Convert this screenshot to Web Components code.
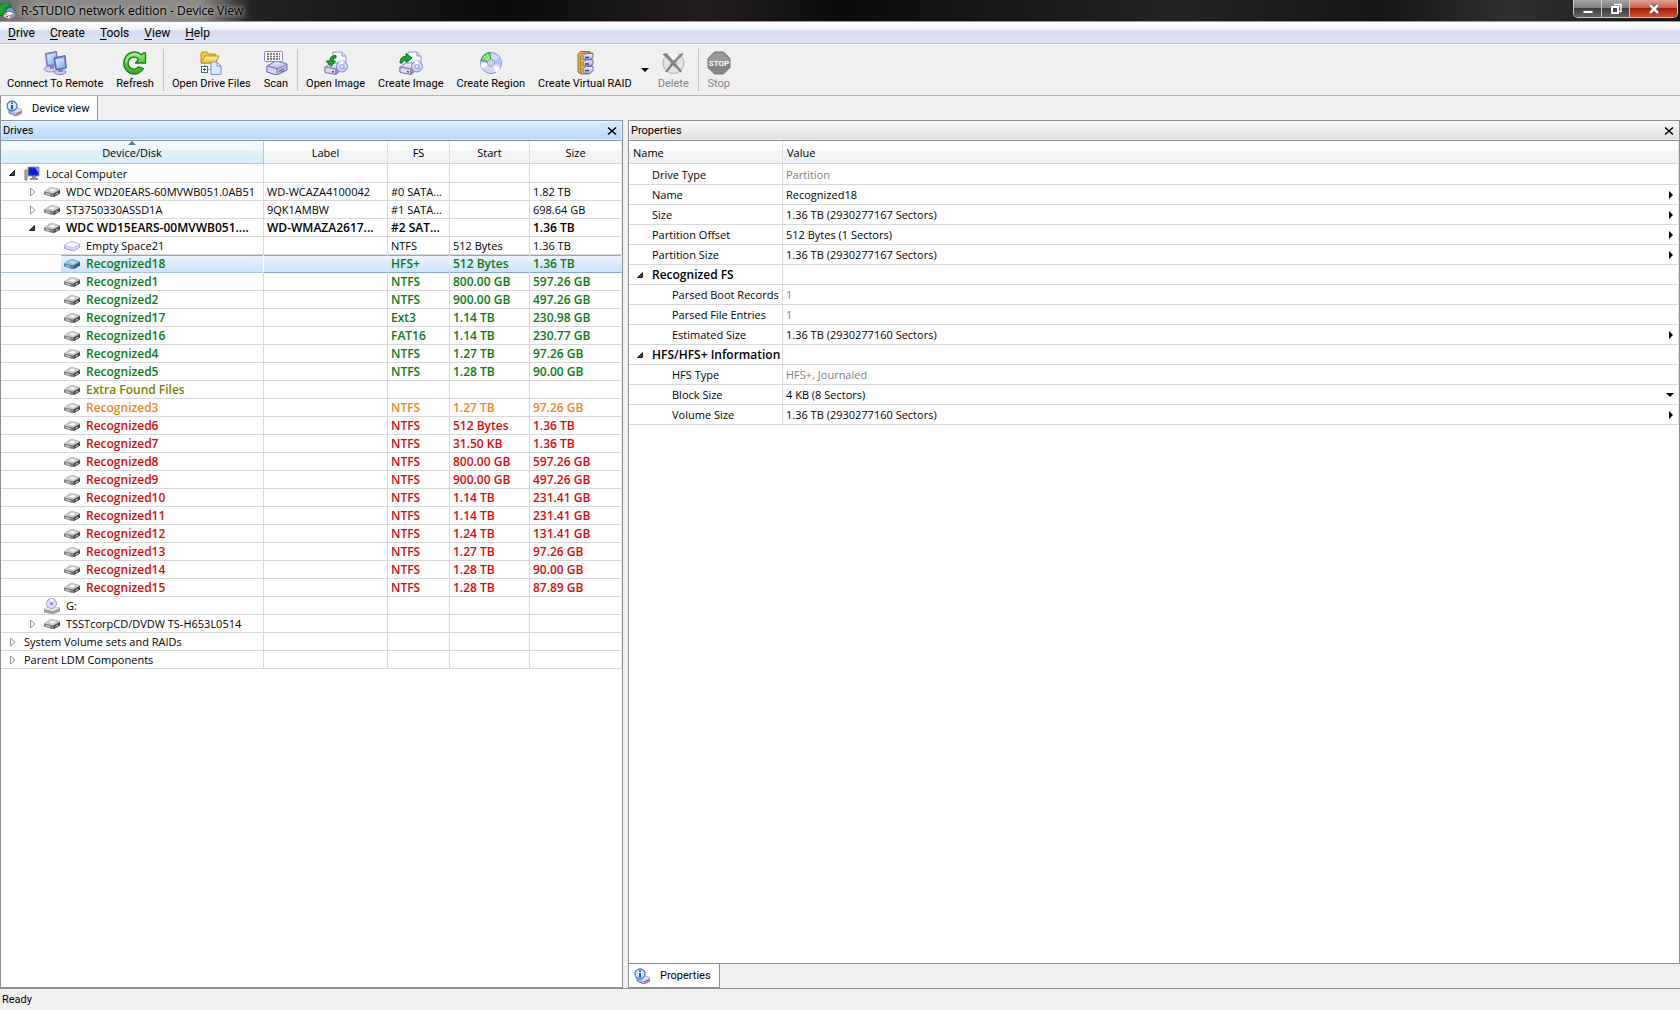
<!DOCTYPE html>
<html lang="en">
<head>
<meta charset="utf-8">
<title>R-STUDIO network edition - Device View</title>
<style>
html, body {
    height: 100%;
    margin: 0;
}

body {
    font-family: "Open Sans", "Noto Sans", sans-serif;
    font-size: 11px;
    color: #000;
    background: #f0f0f0;
    overflow: hidden;
}
</style>
</head>
<body>
<studio-app></studio-app>

<script>
const GRADIENTS = `
<defs>
    <linearGradient id="screen" x1="0" y1="0" x2="1" y2="1"><stop offset="0" stop-color="#e4f4ff"/><stop offset="1" stop-color="#6fb0f4"/></linearGradient>
    <linearGradient id="lilac" x1="0" y1="0" x2="0" y2="1"><stop offset="0" stop-color="#f4f4ff"/><stop offset="1" stop-color="#a9a9dc"/></linearGradient>
    <linearGradient id="green" x1="0" y1="0" x2="0" y2="1"><stop offset="0" stop-color="#8fe860"/><stop offset="1" stop-color="#2fae2a"/></linearGradient>
    <linearGradient id="folder" x1="0" y1="0" x2="0" y2="1"><stop offset="0" stop-color="#fff3a8"/><stop offset="1" stop-color="#edbf3c"/></linearGradient>
</defs>`;

// shared by the image icons: drive in front, sheet and disc behind
const IMAGE_BASE = `
    <path d="M9 1h9l4 4v11H9z" fill="#f6f8ff" stroke="#8d96c4"/>
    <path d="M18 1v4h4" fill="#dde2f6" stroke="#8d96c4"/>
    <path d="M1 16l6-4h8l-3 8-11 1z" fill="url(#lilac)" stroke="#8585bb"/>
    <path d="M1 16l11 2v5.500l-11-2z" fill="#d8d8f2" stroke="#7777ad"/>
    <path d="M12 18l4-3v5l-4 3.500z" fill="#9b9bcc" stroke="#7777ad"/>
    <path d="M8 20.500l2 .4" stroke="#c22" stroke-width="1.500"/>
    <circle cx="18" cy="15.500" r="5.500" fill="#d2d2f8" stroke="#8888cc"/>
    <path d="M18 15.500l-3-4.500a5.500 5.500 0 0 1 5-.6z" fill="#fff"/>
    <path d="M18 15.500l5 2a5.500 5.500 0 0 1-3 3z" fill="#a8c4fa"/>
    <circle cx="18" cy="15.500" r="1.800" fill="#fff" stroke="#8888cc"/>`;

const ICONS = {
    app: [16, `
        <path d="M1 13A7.500 7.500 0 0 1 10 1l1 2-4 1-3 5z" fill="#21a038" stroke="#0d6b22"/>
        <path d="M6 6l5-2 4 4-1 4-8-1z" fill="#6fa4d9" stroke="#456"/>
        <path d="M4 11l5-3 6 2-5 3z" fill="#fff" stroke="#668"/>
        <path d="M4 11l6 2v3l-6-2z" fill="#d8dcec"/><path d="M10 13l5-3v3l-5 3z" fill="#9aa0b8"/>
        <path d="M6 13.500h2" stroke="#d22"/>`],
    connect: [24, `
        <ellipse cx="7.500" cy="18" rx="6.500" ry="3" fill="#d4d4f0" stroke="#9292c4"/>
        <ellipse cx="17" cy="21" rx="6" ry="2.500" fill="#c9c9ec" stroke="#8484bd"/>
        <path d="M7 14l4 1v3H7z" fill="#8888c4"/>
        <path d="M2.500 2.500l11-2 1 13L4 15z" fill="#8f9bd4" stroke="#6470b4"/>
        <path d="M4 4l8.500-2 .8 10.500L5 13.500z" fill="url(#screen)"/>
        <path d="M15 18h4l1 3h-5z" fill="#8080bd"/>
        <path d="M11 7l11-2.500 1.500 12.500L13 18.500z" fill="#7684cb" stroke="#5562ab"/>
        <path d="M12.500 8.500l8.500-2 1 9.700-8 1z" fill="url(#screen)"/>`],
    refresh: [24, `
        <path d="M20.500 17.500Q17 23 11.500 23A10.500 11 0 1 1 18.300 3.800L20.500 2H22.500V12H12.500L15.500 8.500A5.800 6 0 1 0 15.500 15.800z" fill="url(#green)" stroke="#177a20" stroke-width="1.300" stroke-linejoin="round"/>
        <path d="M3 11a9 9 0 0 1 14-6" fill="none" stroke="#c8ffae"/>`],
    openfiles: [24, `
        <path d="M2 12V2.500L3 1h5l1.500 2h7L17 5v7z" fill="#f1c94b" stroke="#b98b1c"/>
        <path d="M2 12l4-7h14l-3.500 7z" fill="url(#folder)" stroke="#b98b1c"/>
        <rect x="2.500" y="15.500" width="6" height="6" fill="#fff" stroke="#56636e"/>
        <path d="M4 18.500h3M5.500 17v3" stroke="#167b25" stroke-width="1.200"/>
        <path d="M5.500 12v3M9 18.500h3" stroke="#777" stroke-dasharray="1 1"/>
        <path d="M12 11h6l4 4v8.500H12z" fill="#d8e8ff" stroke="#7b91c8"/>
        <path d="M18 11v4h4z" fill="#f9fcff" stroke="#7b91c8"/>`],
    scan: [24, `
        <path d="M3 15l9-5 11 3v6l-10 5-10-3z" fill="#b7b7e2" stroke="#7777b2"/>
        <path d="M3 15l9-5 11 3-10 5z" fill="url(#lilac)" stroke="#8585bb"/>
        <path d="M3 15l10 3v6L3 21z" fill="#d8d8f4" stroke="#7777b2"/>
        <path d="M15 20.500l5-2.400" stroke="#555599"/><path d="M17 21.500l3-1.400" stroke="#c33"/>
        <rect x=".5" y=".5" width="18" height="10" rx="1" fill="#f7f8ff" stroke="#8088b6"/>
        <path d="M3 3h13" stroke="#c5362c" stroke-width="1.500" stroke-dasharray="2 1"/>
        <path d="M3 5.500h13" stroke="#2f8f47" stroke-width="1.500" stroke-dasharray="2 1"/>
        <path d="M3 8h13" stroke="#31449c" stroke-width="1.500" stroke-dasharray="2 1"/>`],
    openimage: [24, IMAGE_BASE + `
        <path d="M12 4.500Q5.500 4.500 6 10H2l5 5.500 4.500-5.500H8.800Q8.500 7 12 6.800z" fill="#21a336" stroke="#0b6e1d" stroke-linejoin="round"/>`],
    createimage: [24, IMAGE_BASE + `
        <path d="M1 12Q1 5 7 5.500V2.500l6 4.500-6 4.500V9Q4 8.500 3.500 12z" fill="#21a336" stroke="#0b6e1d" stroke-linejoin="round"/>`],
    region: [24, `
        <circle cx="12" cy="12" r="10.500" fill="#d6d9f8" stroke="#8f92c8"/>
        <path d="M12 12L3 17.500a10 10 0 0 1-1-5z" fill="#fff"/>
        <path d="M12 12l5 9.500a10 10 0 0 0 4-4z" fill="#fff"/>
        <path d="M12 12l9.800 2.500a10 10 0 0 0-1.500-8z" fill="#b4c3f5"/>
        <path d="M12 12L2 9.500A10.500 10.500 0 0 1 11 1.500z" fill="#7ad668" stroke="#2b9a35"/>
        <path d="M12 12L5 5M12 12L8 3" stroke="#c8ffbd"/>
        <circle cx="12" cy="12" r="3.500" fill="#eeeefa" stroke="#8f92c8"/>
        <circle cx="12" cy="12" r="1.500" fill="#fff" stroke="#aaadd4"/>`],
    raid: [24, `
        <path d="M5 3l3-2.500h9v2L8 5v18l-3-2z" fill="#e3b341" stroke="#9c741b"/>
        <path d="M8 4l2-2h10l-1 3v15l-3 3H8z" fill="#efcf72" stroke="#a57d22"/>
        <g fill="url(#lilac)" stroke="#6f6fab">
            <path d="M10 4.500l3-2h7v4l-3 2h-7z"/><path d="M10 11l3-2h7v4l-3 2h-7z"/><path d="M10 17.500l3-2h7v4l-3 3h-7z"/>
        </g>
        <path d="M12 6.500h4M12 13h4M12 19.500h4" stroke="#3e3e8e" stroke-width="1.500"/>`],
    remove: [24, `
        <circle cx="12.500" cy="12" r="10.500" fill="#e2e2e2" stroke="#b4b4b4"/>
        <path d="M12.500 12L7 3a10 10 0 0 1 10-1z" fill="#f8f8f8"/>
        <circle cx="12.500" cy="12" r="3" fill="#eee" stroke="#aaa"/>
        <path d="M1.500 3l4-1 7 8 8-8 2 1-8.500 9 7 8-1.500 1.500-7.500-7.500-6 7.500-2-1 6.500-8.500z" fill="#828282"/>`],
    stop: [24, `
        <path d="M7.500 1h9L23 7.500v9L16.500 23h-9L1 16.500v-9z" fill="#858585" stroke="#777"/>
        <path d="M8 2h8l6 6v3H2V8z" fill="#999"/>
        <text x="12" y="15" text-anchor="middle" font-family="Roboto" font-size="8" font-weight="bold" fill="#fff">STOP</text>`],
    info: [16, `
        <path d="M3 10l6-3 7 3v3l-6 3-7-3z" fill="#b4b4e2" stroke="#7777b5"/>
        <path d="M3 10l6-3 7 3-6 3z" fill="#e6e6fb"/>
        <path d="M10 14l5-2.400" stroke="#d23a3a"/>
        <circle cx="6" cy="6" r="5" fill="#d6ebff" stroke="#4c7cc0" stroke-width="1.300"/>
        <path d="M6 2.500V4M6 5v4" stroke="#155dbd" stroke-width="2"/>
        <path d="M4.500 9h3" stroke="#155dbd"/>`],
    computer: [16, `
        <path d="M1 5h2v10H1z" fill="#bbb" stroke="#777"/>
        <path d="M4 2h11v9H4z" fill="#1020c8" stroke="#99a"/>
        <path d="M11 2.500h3.500V8z" fill="#7f9cff"/>
        <path d="M8 11h4v2h2v2H6v-2h2z" fill="#8d8d95"/>`],
    drive: [16, `
        <path d="M0 7.500L6 3.500h4l6 2v4L10 13H8L0 10.500z" fill="#808080"/>
        <path d="M0 7.500L6 3.500h4l6 2.500-6.500 3.500z" fill="#c9c9c9"/>
        <path d="M5 6.500L8 5l4 1-3 1.500z" fill="#fff"/>
        <path d="M9.500 9.500L16 6v3.500L10 13z" fill="#484848"/>
        <path d="M11.500 10.500l2.500-1.300M2 9.500l4 1.200" stroke="#ddd"/>`],
    picked: [16, `
        <path d="M0 7.500L6 3.500h4l6 2v4L10 13H8L0 10.500z" fill="#5584ae"/>
        <path d="M0 7.500L6 3.500h4l6 2.500-6.500 3.500z" fill="#94bfe2"/>
        <path d="M5 6.500L8 5l4 1-3 1.500z" fill="#d0e6f8"/>
        <path d="M9.500 9.500L16 6v3.500L10 13z" fill="#315c84"/>
        <path d="M2 9.500l4 1.200" stroke="#bcd8ee"/>`],
    empty: [16, `
        <path d="M.5 7.500L6 4h4l5.500 2v3.500L9.500 13 .5 10.500z" fill="#d6d6f6" stroke="#a3a3d8"/>
        <path d="M.5 7.500L6 4h4l5.500 2-6 3.500z" fill="#fafaff" stroke="#b5b5e2" stroke-width=".6"/>`],
    disc: [16, `
        <path d="M0 11l6-3 10 2v3l-7 3-9-2z" fill="#a0a0a0" stroke="#888" stroke-width=".6"/>
        <path d="M0 11l6-3 10 2-7 3z" fill="#ececec"/>
        <circle cx="7.500" cy="5.500" r="5" fill="#dcdcf8" stroke="#9c9cce"/>
        <path d="M7.500 5.500L6 1a5 5 0 0 1 4 .5z" fill="#fff"/>
        <circle cx="7.500" cy="5.500" r="1.500" fill="#7c83da"/>`],
    closed: [12, `<path d="M4.500 2v8l4.500-4z" fill="#fff" stroke="#989898"/>`],
    open: [12, `<path d="M8.500 3.500v5h-5z" fill="#444" stroke="#222"/>`],
    right: [10, `<path d="M4 1v8l4-4z" fill="#000"/>`],
    down: [10, `<path d="M1 3h8L5 7z" fill="#000"/>`],
    cross: [10, `<path d="M1 1.500l8 7M9 1.500l-8 7" stroke="#000" stroke-width="1.500"/>`]
};

function icon(name) {
    const [size, body] = ICONS[name];
    return `<svg width="${size}" height="${size}" viewBox="0 0 ${size} ${size}" aria-hidden="true">${GRADIENTS}${body}</svg>`;
}

class TitleBar extends HTMLElement {
    constructor() {
        super();
        this.attachShadow({ mode: 'open' }).innerHTML = `
        <style>
        :host {
            display: flex;
            align-items: flex-start;
            height: 21px;
            overflow: hidden;
            color: #000;
            font-size: 12px;
            background: linear-gradient(90deg, #6a6a68 0, #8c8a86 40px, #8c8a86 200px, #232323 252px, #0c0c0c 30%, #221e1d 42%, #0c0c0c 50%, #242424 70%, #151515 82%, #303030 90%, #151515 100%);
            border-bottom: 1px solid #999;
        }
        .caption {
            display: flex;
            align-items: center;
            gap: 5px;
            flex: 1;
            height: 21px;
            text-shadow: 0 0 5px #bbb, 0 0 5px #bbb;
        }
        .controls {
            display: flex;
            height: 18px;
            margin-right: 2px;
            border: 1px solid #c8c8c8;
            border-top: 0;
            border-radius: 0 0 5px 5px;
            overflow: hidden;
            box-sizing: border-box;
        }
        button {
            display: grid;
            place-items: center;
            width: 28px;
            padding: 0;
            border: 0;
            border-right: 1px solid #c8c8c8;
            background: linear-gradient(#a5a5a5 0, #7d7d7d 45%, #3c3c3c 50%, #666 100%);
        }
        button.close {
            width: 47px;
            border: 0;
            background: linear-gradient(#e0a294 0, #c9604e 45%, #a51d0a 50%, #d2512c 100%);
        }
        </style>
        <div class="caption">${icon('app')}<span>R-STUDIO network edition - Device View</span></div>
        <div class="controls">
            <button type="button" aria-label="Minimize"><svg width="12" height="12"><path d="M1 7.500h10v3H1z" fill="#fff" stroke="#555"/></svg></button>
            <button type="button" aria-label="Restore"><svg width="12" height="12"><path d="M4 1.500h7v7H9" fill="none" stroke="#fff" stroke-width="1.500"/><path d="M2 4h6v6H2z" fill="none" stroke="#fff" stroke-width="2"/></svg></button>
            <button type="button" class="close" aria-label="Close"><svg width="12" height="12"><path d="M2 2l8 8M10 2l-8 8" stroke="#444" stroke-width="4"/><path d="M2 2l8 8M10 2l-8 8" stroke="#fff" stroke-width="2.500"/></svg></button>
        </div>`;
    }
}

class MenuBar extends HTMLElement {
    constructor() {
        super();
        const items = ['Drive', 'Create', 'Tools', 'View', 'Help'];
        this.attachShadow({ mode: 'open' }).innerHTML = `
        <style>
        :host {
            display: flex;
            gap: 3px;
            height: 21px;
            padding-left: 2px;
            background: linear-gradient(#fff 0, #eef1f8 38%, #d5dbed 42%, #e1e6f5 100%);
            border-bottom: 1px solid #b6bccc;
        }
        button {
            padding: 0 6px;
            border: 0;
            background: none;
            font: 12px Roboto, sans-serif;
            color: #000;
        }
        u {
            text-underline-offset: 2px;
        }
        </style>
        ${items.map(item => `<button type="button"><u>${item[0]}</u>${item.slice(1)}</button>`).join('')}`;
    }
}

class ToolButton extends HTMLElement {
    connectedCallback() {
        const off = this.hasAttribute('disabled');
        if (!this.shadowRoot) this.attachShadow({ mode: 'open' });
        this.shadowRoot.innerHTML = `
        <style>
        :host {
            display: block;
        }
        button {
            display: flex;
            flex-direction: column;
            align-items: center;
            gap: 1px;
            padding: 6px 6px 0;
            border: 0;
            background: none;
            font: 11px/16px Roboto, sans-serif;
            color: #000;
        }
        button:disabled {
            color: #848484;
        }
        </style>
        <button type="button" ${off ? 'disabled' : ''}>${icon(this.getAttribute('icon'))}<span><slot></slot></span></button>`;
    }
}

class ToolBar extends HTMLElement {
    constructor() {
        super();
        this.attachShadow({ mode: 'open' }).innerHTML = `
        <style>
        :host {
            display: flex;
            gap: 1px;
            height: 50px;
            padding-left: 1px;
            border-top: 1px solid #fff;
            border-bottom: 1px solid #b4b4b4;
        }
        hr {
            width: 1px;
            height: 42px;
            margin: 4px 1px 0 2px;
            border: 0;
            background: #c6c6c6;
        }
        .more {
            width: 12px;
            padding: 0;
            border: 0;
            background: none;
        }
        </style>
        <tool-button icon="connect">Connect To Remote</tool-button>
        <tool-button icon="refresh">Refresh</tool-button>
        <hr>
        <tool-button icon="openfiles">Open Drive Files</tool-button>
        <tool-button icon="scan">Scan</tool-button>
        <hr>
        <tool-button icon="openimage">Open Image</tool-button>
        <tool-button icon="createimage">Create Image</tool-button>
        <tool-button icon="region">Create Region</tool-button>
        <tool-button icon="raid">Create Virtual RAID</tool-button>
        <button class="more" type="button" aria-label="More RAID types">${icon('down')}</button>
        <tool-button icon="remove" disabled>Delete</tool-button>
        <hr>
        <tool-button icon="stop" disabled>Stop</tool-button>`;
    }
}

class PageTab extends HTMLElement {
    constructor() {
        super();
        this.attachShadow({ mode: 'open' }).innerHTML = `
        <style>
        :host {
            display: flex;
        }
        button {
            display: flex;
            align-items: center;
            gap: 10px;
            height: 24px;
            padding: 0 8px 0 5px;
            box-sizing: border-box;
            border: 1px solid #8e8f8f;
            border-top-width: var(--tab-top, 1px);
            border-bottom-width: var(--tab-bottom, 1px);
            background: #fff;
            font: 11px Roboto, sans-serif;
            color: #000;
        }
        </style>
        <button type="button">${icon('info')}<slot></slot></button>`;
    }
}

class DockPanel extends HTMLElement {
    connectedCallback() {
        if (!this.shadowRoot) this.attachShadow({ mode: 'open' });
        this.shadowRoot.innerHTML = `
        <style>
        :host {
            display: flex;
            flex-direction: column;
            min-width: 0;
            --line: #8e8f8f;
            --head: linear-gradient(#fafafa, #dedede);
        }
        :host([active]) {
            --line: #8296ad;
            --head: linear-gradient(#dcebfd, #b9d6f7);
        }
        header {
            display: flex;
            align-items: center;
            justify-content: space-between;
            height: 19px;
            padding: 0 5px 0 2px;
            border: 1px solid var(--line);
            box-shadow: inset 0 0 0 1px rgba(255, 255, 255, 0.5);
            background: var(--head);
            font: 11px Roboto, sans-serif;
        }
        header button {
            display: grid;
            padding: 0;
            border: 0;
            background: none;
        }
        .body {
            flex: 1;
            border: 1px solid #8e8f8f;
            border-top: 0;
            background: #fff;
        }
        </style>
        <header>${this.getAttribute('heading')}<button type="button" aria-label="Close">${icon('cross')}</button></header>
        <div class="body"><slot></slot></div>
        <slot name="tabs"></slot>`;
    }
}

const GRID_STYLE = `
        :host {
            display: block;
        }
        table {
            width: 100%;
            table-layout: fixed;
            border-collapse: separate;
            border-spacing: 0;
        }
        th {
            height: 23px;
            padding: 0;
            box-sizing: border-box;
            font-weight: normal;
            border-right: 1px solid #dfe0e2;
            border-bottom: 1px solid #d5d5d5;
            background: linear-gradient(#fff 0, #fff 42%, #f4f5f7 44%, #f1f2f4 100%);
        }
        td {
            padding: 0 0 0 3px;
            box-sizing: border-box;
            border-right: 1px solid #d8d8d8;
            border-bottom: 1px solid #d8d8d8;
            white-space: nowrap;
            overflow: hidden;
            text-overflow: ellipsis;
        }
        th:last-child, td:last-child {
            border-right-color: #e8e8e8;
        }
        svg {
            display: block;
            flex: none;
        }`;

// level, twisty, icon, name, label, fs, start, size, tone
const DRIVES = [
    [0, 'open', 'computer', 'Local Computer', '', '', '', '', ''],
    [1, 'closed', 'drive', 'WDC WD20EARS-60MVWB051.0AB51', 'WD-WCAZA4100042', '#0 SATA...', '', '1.82 TB', ''],
    [1, 'closed', 'drive', 'ST3750330ASSD1A', '9QK1AMBW', '#1 SATA...', '', '698.64 GB', ''],
    [1, 'open', 'drive', 'WDC WD15EARS-00MVWB051....', 'WD-WMAZA2617...', '#2 SAT...', '', '1.36 TB', 'bold'],
    [2, '', 'empty', 'Empty Space21', '', 'NTFS', '512 Bytes', '1.36 TB', ''],
    [2, '', 'picked', 'Recognized18', '', 'HFS+', '512 Bytes', '1.36 TB', 'bold green selected'],
    [2, '', 'drive', 'Recognized1', '', 'NTFS', '800.00 GB', '597.26 GB', 'bold green'],
    [2, '', 'drive', 'Recognized2', '', 'NTFS', '900.00 GB', '497.26 GB', 'bold green'],
    [2, '', 'drive', 'Recognized17', '', 'Ext3', '1.14 TB', '230.98 GB', 'bold green'],
    [2, '', 'drive', 'Recognized16', '', 'FAT16', '1.14 TB', '230.77 GB', 'bold green'],
    [2, '', 'drive', 'Recognized4', '', 'NTFS', '1.27 TB', '97.26 GB', 'bold green'],
    [2, '', 'drive', 'Recognized5', '', 'NTFS', '1.28 TB', '90.00 GB', 'bold green'],
    [2, '', 'drive', 'Extra Found Files', '', '', '', '', 'bold olive'],
    [2, '', 'drive', 'Recognized3', '', 'NTFS', '1.27 TB', '97.26 GB', 'bold orange'],
    [2, '', 'drive', 'Recognized6', '', 'NTFS', '512 Bytes', '1.36 TB', 'bold red'],
    [2, '', 'drive', 'Recognized7', '', 'NTFS', '31.50 KB', '1.36 TB', 'bold red'],
    [2, '', 'drive', 'Recognized8', '', 'NTFS', '800.00 GB', '597.26 GB', 'bold red'],
    [2, '', 'drive', 'Recognized9', '', 'NTFS', '900.00 GB', '497.26 GB', 'bold red'],
    [2, '', 'drive', 'Recognized10', '', 'NTFS', '1.14 TB', '231.41 GB', 'bold red'],
    [2, '', 'drive', 'Recognized11', '', 'NTFS', '1.14 TB', '231.41 GB', 'bold red'],
    [2, '', 'drive', 'Recognized12', '', 'NTFS', '1.24 TB', '131.41 GB', 'bold red'],
    [2, '', 'drive', 'Recognized13', '', 'NTFS', '1.27 TB', '97.26 GB', 'bold red'],
    [2, '', 'drive', 'Recognized14', '', 'NTFS', '1.28 TB', '90.00 GB', 'bold red'],
    [2, '', 'drive', 'Recognized15', '', 'NTFS', '1.28 TB', '87.89 GB', 'bold red'],
    [1, '', 'disc', 'G:', '', '', '', '', ''],
    [1, 'closed', 'drive', 'TSSTcorpCD/DVDW TS-H653L0514', '', '', '', '', ''],
    [0, 'closed', '', 'System Volume sets and RAIDs', '', '', '', '', ''],
    [0, 'closed', '', 'Parent LDM Components', '', '', '', '', '']
];

class DriveTree extends HTMLElement {
    constructor() {
        super();
        this.attachShadow({ mode: 'open' }).innerHTML = `
        <style>
        ${GRID_STYLE}
        .device { width: 263px; }
        .label { width: 124px; }
        .fs { width: 62px; }
        .start { width: 80px; }
        .sorted {
            position: relative;
            background: linear-gradient(#f4fafd 0, #eef8fc 42%, #e0f2fa 44%, #d5edf8 100%);
            border-color: #9bd1e6;
        }
        .sort {
            position: absolute;
            top: 0;
            left: 50%;
            margin-left: -4px;
        }
        tbody tr {
            height: 18px;
            line-height: 17px;
        }
        tbody tr:first-child {
            height: 19px;
        }
        td:first-child {
            padding: 0;
        }
        .node {
            display: flex;
            align-items: center;
            padding-left: calc(var(--level) * 20px + 3px);
        }
        .twisty {
            flex: none;
            width: 17px;
            padding-left: 2px;
            box-sizing: border-box;
        }
        .name {
            display: flex;
            flex: 1;
            align-items: center;
            gap: 6px;
            min-width: 0;
            height: 17px;
            padding-left: 3px;
        }
        .bold { font-weight: 600; font-size: 12px; }
        .green { color: #0a7a14; }
        .olive { color: #808000; }
        .orange { color: #ee8a18; }
        .red { color: #d40c0c; }
        .selected td {
            border-color: #84a9d8;
            border-right-color: transparent;
        }
        .selected td:not(:first-child), .selected .name {
            background: linear-gradient(#eef5fe, #cde2fb);
            box-shadow: inset 0 1px #84a9d8;
        }
        .selected td:first-child {
            border-bottom-color: #a9c2e0;
        }
        </style>
        <table>
            <thead><tr>
                <th class="device sorted">Device/Disk<svg class="sort" width="8" height="4"><path d="M0 4l4-4 4 4z" fill="#4f7f96"/></svg></th>
                <th class="label">Label</th><th class="fs">FS</th><th class="start">Start</th><th>Size</th>
            </tr></thead>
            <tbody>
            ${DRIVES.map(([level, twisty, image, name, label, fs, start, size, tone]) => `
                <tr class="${tone}">
                    <td><div class="node" style="--level: ${level}">
                        <span class="twisty">${twisty ? icon(twisty) : ''}</span>
                        <span class="name">${image ? icon(image) : ''}<span>${name}</span></span>
                    </div></td>
                    <td>${label}</td><td>${fs}</td><td>${start}</td><td>${size}</td>
                </tr>`).join('')}
            </tbody>
        </table>`;
    }
}

// kind, name, value, action
const PROPERTIES = [
    ['item fixed', 'Drive Type', 'Partition', ''],
    ['item', 'Name', 'Recognized18', 'right'],
    ['item', 'Size', '1.36 TB (2930277167 Sectors)', 'right'],
    ['item', 'Partition Offset', '512 Bytes (1 Sectors)', 'right'],
    ['item', 'Partition Size', '1.36 TB (2930277167 Sectors)', 'right'],
    ['group', 'Recognized FS', '', ''],
    ['sub fixed', 'Parsed Boot Records', '1', ''],
    ['sub fixed', 'Parsed File Entries', '1', ''],
    ['sub', 'Estimated Size', '1.36 TB (2930277160 Sectors)', 'right'],
    ['group', 'HFS/HFS+ Information', '', ''],
    ['sub fixed', 'HFS Type', 'HFS+, Journaled', ''],
    ['sub', 'Block Size', '4 KB (8 Sectors)', 'down'],
    ['sub', 'Volume Size', '1.36 TB (2930277160 Sectors)', 'right']
];

class PropertyGrid extends HTMLElement {
    constructor() {
        super();
        this.attachShadow({ mode: 'open' }).innerHTML = `
        <style>
        ${GRID_STYLE}
        th {
            padding-left: 4px;
            text-align: left;
        }
        th:first-child {
            width: 154px;
        }
        tbody tr {
            height: 20px;
            line-height: 19px;
        }
        tbody tr:first-child {
            height: 21px;
        }
        td.key {
            padding-left: 23px;
        }
        .sub td.key {
            padding-left: 43px;
        }
        .group td.key {
            padding-left: 5px;
            font-weight: 600;
            font-size: 12px;
        }
        .key div, .value {
            display: flex;
            align-items: center;
            gap: 6px;
        }
        .value {
            justify-content: space-between;
            padding-right: 3px;
        }
        .fixed .value {
            color: #808080;
        }
        button {
            padding: 0;
            border: 0;
            background: none;
        }
        </style>
        <table>
            <thead><tr><th>Name</th><th>Value</th></tr></thead>
            <tbody>
            ${PROPERTIES.map(([kind, name, value, action]) => `
                <tr class="${kind}">
                    <td class="key"><div>${kind === 'group' ? icon('open') : ''}${name}</div></td>
                    <td><div class="value"><span>${value}</span>${action ? `<button type="button" aria-label="Edit ${name}">${icon(action)}</button>` : ''}</div></td>
                </tr>`).join('')}
            </tbody>
        </table>`;
    }
}

class StudioApp extends HTMLElement {
    constructor() {
        super();
        this.attachShadow({ mode: 'open' }).innerHTML = `
        <style>
        :host {
            display: flex;
            flex-direction: column;
            height: 100vh;
        }
        nav {
            display: flex;
            height: 24px;
            --tab-top: 0;
            --tab-bottom: 0;
        }
        main {
            display: grid;
            grid-template-columns: 623px 1fr;
            gap: 5px;
            flex: 1;
            min-height: 0;
        }
        .tabs {
            --tab-top: 0;
        }
        footer {
            height: 21px;
            padding-left: 2px;
            border-top: 1px solid #8e8f8f;
            font: 11px/22px Roboto, sans-serif;
        }
        </style>
        <title-bar></title-bar>
        <menu-bar></menu-bar>
        <tool-bar></tool-bar>
        <nav><page-tab>Device view</page-tab></nav>
        <main>
            <dock-panel heading="Drives" active><drive-tree></drive-tree></dock-panel>
            <dock-panel heading="Properties"><property-grid></property-grid><page-tab class="tabs" slot="tabs">Properties</page-tab></dock-panel>
        </main>
        <footer>Ready</footer>`;
    }
}

customElements.define('title-bar', TitleBar);
customElements.define('menu-bar', MenuBar);
customElements.define('tool-button', ToolButton);
customElements.define('tool-bar', ToolBar);
customElements.define('page-tab', PageTab);
customElements.define('dock-panel', DockPanel);
customElements.define('drive-tree', DriveTree);
customElements.define('property-grid', PropertyGrid);
customElements.define('studio-app', StudioApp);
</script>
</body>
</html>
